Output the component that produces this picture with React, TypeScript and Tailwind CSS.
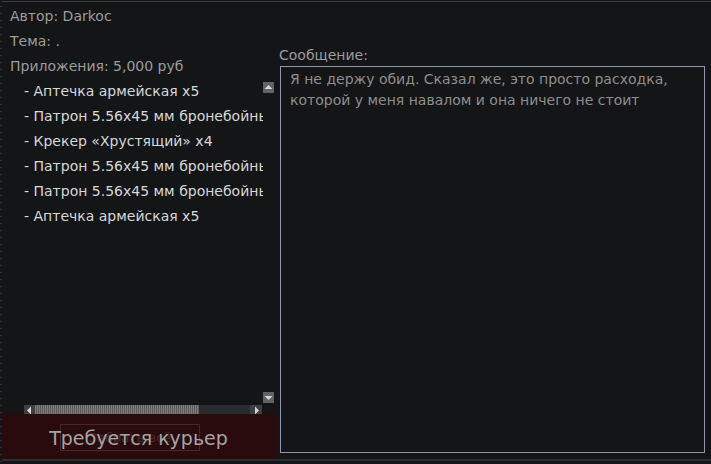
import React from "react";

const items = [
  "Аптечка армейская x5",
  "Патрон 5.56x45 мм бронебойный M995 x60",
  "Крекер «Хрустящий» x4",
  "Патрон 5.56x45 мм бронебойный M995 x60",
  "Патрон 5.56x45 мм бронебойный M995 x60",
  "Аптечка армейская x5",
];

function Tri({ dir }: { dir: "up" | "down" | "left" | "right" }) {
  const pts =
    dir === "up"
      ? "1.5,7 5.5,3 9.5,7"
      : dir === "down"
      ? "1.5,4 5.5,8 9.5,4"
      : dir === "left"
      ? "7,1.5 3,5.5 7,9.5"
      : "4,1.5 8,5.5 4,9.5";
  return (
    <svg width="11" height="11" viewBox="0 0 11 11">
      <polygon points={pts} fill="#d4d4d4" />
    </svg>
  );
}

export default function App() {
  return (
    <div
      className="w-[711px] h-[464px] bg-[#141517] overflow-hidden relative pt-[1px]"
      style={{ fontFamily: '"DejaVu Sans", "Noto Sans", sans-serif' }}
    >
      <div className="absolute left-0 top-0 w-[2px] h-full bg-[repeating-linear-gradient(to_bottom,#141517_0px,#141517_6px,#34363a_6px,#34363a_7px)]" />
      <div className="h-[460px] border-t border-[#3a3b3e] border-b-[2px] border-b-[#2c2d30] flex">
        {/* left column */}
        <div className="w-[279px] flex flex-col pl-[2px]">
          <div className="pl-[8px] text-[14px] leading-[25px] text-[#9c9c9c] pt-[2px]">
            <div>Автор: Darkoc</div>
            <div>Тема: .</div>
            <div>Приложения: 5,000 руб</div>
          </div>
          <div className="flex h-[330px]">
            <div className="w-[261px] overflow-hidden pl-[22px] text-[14px] leading-[25px] text-[#d8d8d8] whitespace-nowrap">
              {items.map((t, i) => (
                <div key={i}>- {t}</div>
              ))}
            </div>
            <div className="w-[11px] flex flex-col justify-between pt-[3px] pb-[2px]">
              <div className="w-[11px] h-[11px] bg-[#626262] flex items-center justify-center">
                <Tri dir="up" />
              </div>
              <div className="w-[11px] h-[11px] bg-[#626262] flex items-center justify-center">
                <Tri dir="down" />
              </div>
            </div>
          </div>
          <div className="flex h-[10px] ml-[22px] w-[238px] bg-[#2a2b2e]">
            <div className="w-[11px] h-[10px] bg-[#3e3f42] flex items-center justify-center">
              <Tri dir="left" />
            </div>
            <div className="w-[164px] h-[10px] bg-[repeating-linear-gradient(to_right,#7a7a7a_0px,#7a7a7a_1px,#5c5c5c_1px,#5c5c5c_2px)]" />
            <div className="flex-1" />
            <div className="w-[12px] h-[10px] bg-[#3e3f42] flex items-center justify-center">
              <Tri dir="right" />
            </div>
          </div>
          <div className="mt-[-1px] h-[45px] w-[275px] bg-[#2a0b0d] relative flex items-center justify-center pt-[3px]">
            <div className="absolute left-[58px] top-[10px] w-[140px] h-[27px] border border-[#4a2629] flex items-center justify-center text-[13px] text-[#4a292c]">
              Забрать всё
            </div>
            <span className="relative text-[19px] text-[#a4a4a4] mr-[2px]">Требуется курьер</span>
          </div>
        </div>
        {/* right column */}
        <div className="flex-1 flex flex-col pt-[43px] pr-[6px]">
          <div className="text-[14px] leading-[20px] text-[#9c9c9c]">Сообщение:</div>
          <div className="mt-[1px] ml-[1px] h-[387px] border border-[#9096b0] px-[9px] pt-[2px] text-[14px] leading-[21px] text-[#8e8e8e]">
            Я не держу обид. Сказал же, это просто расходка, которой у меня навалом и она ничего не стоит
          </div>
        </div>
      </div>
    </div>
  );
}
